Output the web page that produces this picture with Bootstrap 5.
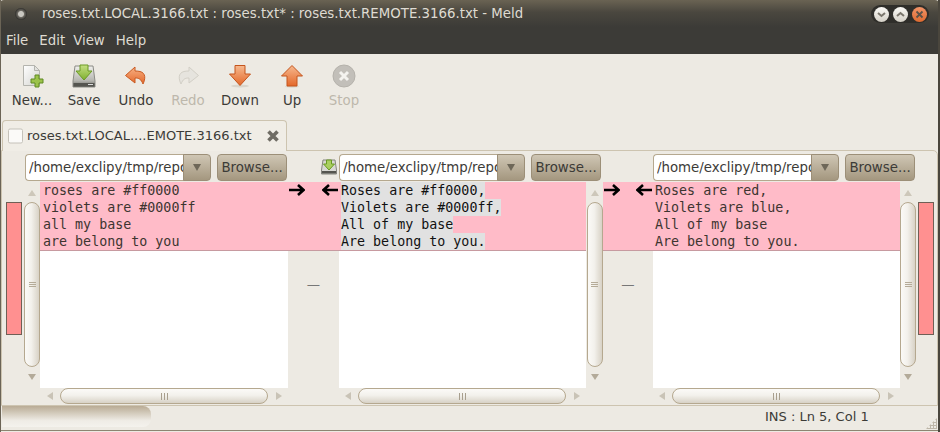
<!DOCTYPE html>
<html lang="en">
<head>
<meta charset="utf-8">
<title>Meld</title>
<link rel="stylesheet" href="https://cdn.jsdelivr.net/npm/bootstrap@5.3.0/dist/css/bootstrap.min.css">
<style>
html,body{margin:0;height:432px;overflow:hidden;background:#edeae3}
.meld-win{width:940px;height:432px;font:13.33px/16px "DejaVu Sans",sans-serif;color:#3c3b37;background:#edeae3;border-left:1px solid #6b6456;border-right:2px solid #4a463d;position:relative;overflow:hidden}
.meld-title{height:27px;margin:0 -2px 0 -1px;padding-left:42px;flex:none;color:#dfdbd2;background:linear-gradient(#6a6353,#4a473f 45%,#3c3b37);border-radius:4px 5px 0 0}
.meld-winicon{position:absolute;left:14px;top:8px;width:12px;height:12px;border-radius:50%;background:radial-gradient(circle,#c9c7c1 0 2.500px,#6d6a63 3.500px,#2e2d2a 6px)}
.meld-pill{position:absolute;left:870px;top:5px;width:58px;height:18px;border-radius:9px;background:#2f2e2a;gap:4px;padding:0 3px}
.meld-wb{width:15px;height:15px;border-radius:50%;background:linear-gradient(#fbfaf6,#d4d0c6)}
.meld-wb.meld-close{background:linear-gradient(#f29468,#dd6a30)}
.meld-menu{height:27px;flex:none;margin:0 -2px 0 -1px;padding-left:6px;background:#3c3b37;color:#dfdbd2}
.meld-menu .nav-link{padding:0;margin-right:11px;color:#dfdbd2;font-size:13.33px}
.meld-menu .nav-link.meld-tight{margin-right:8px}
.meld-tools{height:66px;flex:none;padding:10px 0 0 5px}
.meld-tool{width:52px;padding:0;border:0;border-radius:0;color:#3c3b37;font-size:13.33px;line-height:16px}
.meld-tool.meld-off{color:#bdb8ac;opacity:1}
.meld-tool svg{display:block;margin:0 auto 5px}
.meld-tabs{height:31px;flex:none;padding-left:1px;position:relative;z-index:1}
.meld-tab{width:285px;height:31px;background:#f0ede6;border:1px solid #cdc4b0;border-bottom:0;border-radius:4px 4px 0 0;padding:0 6px 0 4px;white-space:nowrap;font-size:13px}
.meld-tabname{margin-left:4px}
.meld-panel{height:256px;flex:none;margin-top:-1px;border:1px solid #cdc4b0;border-radius:0 5px 0 0;padding:3px 4px 0 4px}
.meld-heads{height:28px;padding-left:19px}
.meld-combo{width:187px;height:27px;flex:none}
.meld-combo .form-control{flex:none;width:159px;height:27px;padding:0 1px 0 3px;font-size:13.33px;color:#3c3b37;background:#fff;border:1px solid #b5a88f;border-right:0;border-radius:4px 0 0 4px;box-shadow:none;min-height:0;font-family:"DejaVu Sans",sans-serif}
.meld-arrowbtn{width:28px;height:27px;padding:0;background:linear-gradient(#cfc6b4,#a4977f);border:1px solid #9c8f78;border-radius:0 4px 4px 0}
.meld-browse{flex:none;width:70px;height:27px;margin-left:5px;padding:0;font-size:13.33px;color:#3c3b37;background:linear-gradient(#cfc6b4,#a4977f);border:1px solid #9c8f78;border-radius:4px;line-height:25px}
.meld-browse:hover,.meld-arrowbtn:hover{background:linear-gradient(#cfc6b4,#a4977f);color:#3c3b37;border-color:#9c8f78}
.meld-tri{display:block;margin:auto;width:0;height:0;border:4px solid transparent;border-top:7px solid #6e6758;border-bottom:0}
.meld-smallsave{margin:5px 2px 0 34px}
.meld-gap{width:52px}
.meld-grid{display:grid;grid-template-columns:16px 18px 248px 51px 247px 17px 50px 247px 18px 16px;grid-template-rows:206px 16px}
.meld-strip{width:16px;height:133px;margin-top:20px;background:#ff9090;border:1px solid #6f5f55}
.meld-vs{padding-top:8px;align-items:center;height:206px}
.meld-vs.meld-vsleft{padding-left:2px}
.meld-vs.meld-vsright{padding-right:2px}
.meld-up,.meld-dn{width:0;height:0;border:4px solid transparent;flex:none}
.meld-up{border-bottom:6px solid #cdc7ba;border-top:0;margin-bottom:6px}
.meld-dn{border-top:6px solid #b3aa99;border-bottom:0;margin-top:7px}
.meld-thumbv{width:16px;height:165px;flex:none;border:1px solid #b5a88f;border-radius:8px;background:linear-gradient(90deg,#fbfaf7,#f3f1ec 45%,#d8d2c6)}
.meld-thumbh{width:208px;height:16px;flex:none;border:1px solid #b5a88f;border-radius:8px;background:linear-gradient(#fbfaf7,#f3f1ec 45%,#d8d2c6)}
.meld-gripv{width:7px;height:5px;border-top:1px solid #b5ab98;border-bottom:1px solid #b5ab98;position:relative}
.meld-griph{width:7px;height:7px;border-left:1px solid #a89f8e;border-right:1px solid #a89f8e;position:relative}
.meld-griph::after{content:"";position:absolute;left:2px;top:0;height:7px;border-left:1px solid #a89f8e}
.meld-gripv::after{content:"";position:absolute;left:0;top:1px;width:7px;border-top:1px solid #b5ab98}
.meld-hs{height:16px;padding-left:6px;gap:7px}
.meld-hs.meld-hsleft{padding-left:7px}
.meld-l,.meld-r{width:0;height:0;border:4px solid transparent;flex:none}
.meld-l{border-right:6px solid #c9c3b6;border-left:0}
.meld-r{border-left:6px solid #c9c3b6;border-right:0;margin-left:1px}
.meld-pane{background:#fff;height:206px}
.meld-pink{background:#ffbbc8;height:69px;border-bottom:1px solid #c79aa0}
.meld-code{font:13.33px/17px "DejaVu Sans Mono",monospace;color:#3d3530;padding-left:2px;white-space:pre}
.meld-code.meld-codeleft{padding-left:3px}
.meld-code div{height:17px}
.meld-mid{color:#111}
.meld-mid span{background:#e1e1e1;display:inline-block}
.meld-gut{height:206px}
.meld-gutpink{height:69px;background:#ffbbc8;border-bottom:1px solid #c79aa0;padding:2px 1px 0}
.meld-dash{height:137px;color:#777;padding-top:26px}
.meld-status{height:25px;flex:none;position:relative;padding-left:764px;border-bottom:1px solid #8d8572;padding-top:1px;font-size:13px}
.meld-prog{position:absolute;left:1px;top:0;width:149px;height:21px;border-radius:0 8px 8px 0;background:linear-gradient(#b9ab95,#d4ccbd 35%,#efece6 70%,#f4f2ed)}
.meld-statustxt{line-height:20px}
.meld-grip{position:absolute;right:1px;bottom:1px;width:11px;height:11px;background:radial-gradient(circle,#bdb6a8 1px,transparent 1.2px) 0 0/3px 3px;clip-path:polygon(100% 0,100% 100%,0 100%)}
</style>
</head>
<body>
<div class="meld-win d-flex flex-column">
  <div class="meld-title d-flex align-items-center">roses.txt.LOCAL.3166.txt : roses.txt* : roses.txt.REMOTE.3166.txt - Meld</div>
  <span class="meld-winicon"></span>
  <div class="meld-pill d-flex align-items-center justify-content-center">
    <span class="meld-wb d-flex"><svg width="15" height="15" viewBox="0 0 15 15"><path d="M4 6l3.500 3L11 6" fill="none" stroke="#7a766c" stroke-width="2"/></svg></span>
    <span class="meld-wb d-flex"><svg width="15" height="15" viewBox="0 0 15 15"><path d="M4 9l3.500-3L11 9" fill="none" stroke="#7a766c" stroke-width="2"/></svg></span>
    <span class="meld-wb meld-close d-flex"><svg width="15" height="15" viewBox="0 0 15 15"><path d="M4.500 4.500l6 6M10.500 4.500l-6 6" fill="none" stroke="#5b5248" stroke-width="1.800"/></svg></span>
  </div>
  <nav class="meld-menu nav align-items-center">
    <a class="nav-link" href="#">File</a><a class="nav-link meld-tight" href="#">Edit</a><a class="nav-link" href="#">View</a><a class="nav-link" href="#">Help</a>
  </nav>
  <div class="meld-tools d-flex align-items-start">
    <button class="btn meld-tool"><svg width="24" height="24" viewBox="0 0 24 24"><defs><linearGradient id="pg" x1="0" y1="0" x2="1" y2="1"><stop offset="0" stop-color="#fff"/><stop offset="1" stop-color="#d3d3cf"/></linearGradient></defs><path d="M3.500 1.500h11l5 5v15h-16z" fill="url(#pg)" stroke="#b4b4ae"/><path d="M14.500 1.500v5h5z" fill="#e2e2de" stroke="#b4b4ae"/><path d="M15 11h4v4h4v4h-4v4h-4v-4h-4v-4h4z" fill="#9bc24a" stroke="#5f8a22"/></svg>New...</button>
    <button class="btn meld-tool"><svg width="24" height="24" viewBox="0 0 24 24"><defs><linearGradient id="hd" x1="0" y1="0" x2="0" y2="1"><stop offset="0" stop-color="#f1f1ee"/><stop offset=".7" stop-color="#b5b5af"/><stop offset="1" stop-color="#65655f"/></linearGradient><linearGradient id="gr" x1="0" y1="0" x2="0" y2="1"><stop offset="0" stop-color="#c4df83"/><stop offset="1" stop-color="#7fb02f"/></linearGradient></defs><path d="M3 2h18l2 15v6H1v-6z" fill="url(#hd)" stroke="#8b8b85"/><rect x="1.500" y="19" width="21" height="3.500" fill="#55554f"/><rect x="16" y="20" width="5" height="1" fill="#ddd"/><path d="M8 1h8v6h4l-8 9-8-9h4z" fill="url(#gr)" stroke="#6a9a24"/></svg>Save</button>
    <button class="btn meld-tool"><svg width="24" height="24" viewBox="0 0 24 24"><defs><linearGradient id="or" x1="0" y1="0" x2="0" y2="1"><stop offset="0" stop-color="#f7b184"/><stop offset="1" stop-color="#e4692c"/></linearGradient></defs><path d="M11 3L1.500 11.500 11 19v-5c4 0 6 1 8 6 2.500-5 3-11-3-12.500-1.500-.4-3.500-.5-5-.5z" fill="url(#or)" stroke="#c95a22"/></svg>Undo</button>
    <button class="btn meld-tool meld-off"><svg width="24" height="24" viewBox="0 0 24 24"><path d="M13 3l9.500 8.500L13 19v-5c-4 0-6 1-8 6-2.500-5-3-11 3-12.500 1.500-.4 3.500-.5 5-.5z" fill="#e6e4de" stroke="#d2cfc6"/></svg>Redo</button>
    <button class="btn meld-tool"><svg width="24" height="24" viewBox="0 0 24 24"><defs><linearGradient id="or2" x1="0" y1="0" x2="0" y2="1"><stop offset="0" stop-color="#f6b98f"/><stop offset="1" stop-color="#e4682a"/></linearGradient></defs><ellipse cx="12" cy="22" rx="9" ry="1.500" fill="#d9d5cb"/><path d="M7 1.500h10V10h5.500L12 21.500 1.500 10H7z" fill="url(#or2)" stroke="#c4541c"/></svg>Down</button>
    <button class="btn meld-tool"><svg width="24" height="24" viewBox="0 0 24 24"><ellipse cx="12" cy="22.500" rx="7" ry="1.200" fill="#d9d5cb"/><path d="M12 1.500L22.500 12H17v10H7V12H1.500z" fill="url(#or2)" stroke="#c4541c"/></svg>Up</button>
    <button class="btn meld-tool meld-off"><svg width="24" height="24" viewBox="0 0 24 24"><circle cx="12" cy="12" r="11" fill="#c2bfb9" stroke="#b5b2ab"/><path d="M8 8l8 8M16 8l-8 8" stroke="#f4f3ef" stroke-width="3"/></svg>Stop</button>
  </div>
  <div class="meld-tabs d-flex">
    <div class="meld-tab d-flex align-items-center">
      <svg class="flex-shrink-0" width="16" height="16" viewBox="0 0 16 16"><rect x="1.500" y="1" width="14" height="14" rx="1.500" fill="#fbfaf8" stroke="#c5c2ba"/></svg>
      <span class="meld-tabname">roses.txt.LOCAL....EMOTE.3166.txt</span>
      <svg class="ms-auto" width="14" height="14" viewBox="0 0 14 14"><path d="M2.500 2.500l9 9M11.500 2.500l-9 9" stroke="#6f6c64" stroke-width="3.600"/></svg>
    </div>
  </div>
  <div class="meld-panel">
    <div class="meld-heads d-flex">
      <div class="meld-combo input-group flex-nowrap"><input class="form-control" value="/home/exclipy/tmp/repo/roses.txt.LOCAL.3166.txt" aria-label="path"><button class="btn meld-arrowbtn"><i class="meld-tri"></i></button></div>
      <button class="btn meld-browse">Browse...</button>
      <svg class="meld-smallsave flex-shrink-0" width="16" height="16" viewBox="0 0 16 16"><path d="M2 1h12l1.500 10v4H.5v-4z" fill="#d8d8d3" stroke="#85857f"/><rect x="1" y="12" width="14" height="2.500" fill="#55554f"/><path d="M5.500 1h5v4h3L8 11 2.500 5h3z" fill="#a9cf5f" stroke="#6a9a24"/></svg>
      <div class="meld-combo input-group flex-nowrap"><input class="form-control" value="/home/exclipy/tmp/repo/roses.txt" aria-label="path"><button class="btn meld-arrowbtn"><i class="meld-tri"></i></button></div>
      <button class="btn meld-browse">Browse...</button>
      <div class="meld-gap flex-shrink-0"></div>
      <div class="meld-combo input-group flex-nowrap"><input class="form-control" value="/home/exclipy/tmp/repo/roses.txt.REMOTE.3166.txt" aria-label="path"><button class="btn meld-arrowbtn"><i class="meld-tri"></i></button></div>
      <button class="btn meld-browse">Browse...</button>
    </div>
    <div class="meld-grid">
      <div><div class="meld-strip"></div></div>
      <div class="meld-vs meld-vsleft d-flex flex-column"><i class="meld-up"></i><div class="meld-thumbv d-flex align-items-center justify-content-center"><i class="meld-gripv"></i></div><i class="meld-dn"></i></div>
      <div class="meld-pane"><div class="meld-pink meld-code meld-codeleft"><div>roses are #ff0000</div><div>violets are #0000ff</div><div>all my base</div><div>are belong to you</div></div></div>
      <div class="meld-gut"><div class="meld-gutpink d-flex justify-content-between align-items-start">
        <svg width="16" height="12" viewBox="0 0 16 12"><path d="M0 6h14M9 1l5.500 5L9 11" fill="none" stroke="#000" stroke-width="2.600"/></svg>
        <svg width="16" height="12" viewBox="0 0 16 12"><path d="M16 6H2M7 1L1.500 6 7 11" fill="none" stroke="#000" stroke-width="2.600"/></svg>
      </div><div class="meld-dash d-flex align-items-start justify-content-center">—</div></div>
      <div class="meld-pane"><div class="meld-pink meld-code meld-mid"><div><span>Roses are #ff0000,</span></div><div><span>Violets are #0000ff,</span></div><div><span>All of my base</span></div><div><span>Are belong to you.</span></div></div></div>
      <div class="meld-vs d-flex flex-column"><i class="meld-up"></i><div class="meld-thumbv d-flex align-items-center justify-content-center"><i class="meld-gripv"></i></div><i class="meld-dn"></i></div>
      <div class="meld-gut"><div class="meld-gutpink d-flex justify-content-between align-items-start">
        <svg width="16" height="12" viewBox="0 0 16 12"><path d="M0 6h14M9 1l5.500 5L9 11" fill="none" stroke="#000" stroke-width="2.600"/></svg>
        <svg width="16" height="12" viewBox="0 0 16 12"><path d="M16 6H2M7 1L1.500 6 7 11" fill="none" stroke="#000" stroke-width="2.600"/></svg>
      </div><div class="meld-dash d-flex align-items-start justify-content-center">—</div></div>
      <div class="meld-pane"><div class="meld-pink meld-code"><div>Roses are red,</div><div>Violets are blue,</div><div>All of my base</div><div>Are belong to you.</div></div></div>
      <div class="meld-vs meld-vsright d-flex flex-column"><i class="meld-up"></i><div class="meld-thumbv d-flex align-items-center justify-content-center"><i class="meld-gripv"></i></div><i class="meld-dn"></i></div>
      <div><div class="meld-strip"></div></div>

      <div></div><div></div>
      <div class="meld-hs meld-hsleft d-flex align-items-center"><i class="meld-l"></i><div class="meld-thumbh d-flex align-items-center justify-content-center"><i class="meld-griph"></i></div><i class="meld-r"></i></div>
      <div></div>
      <div class="meld-hs d-flex align-items-center"><i class="meld-l"></i><div class="meld-thumbh d-flex align-items-center justify-content-center"><i class="meld-griph"></i></div><i class="meld-r"></i></div>
      <div></div><div></div>
      <div class="meld-hs d-flex align-items-center"><i class="meld-l"></i><div class="meld-thumbh d-flex align-items-center justify-content-center"><i class="meld-griph"></i></div><i class="meld-r"></i></div>
      <div></div><div></div>
    </div>
  </div>
  <div class="meld-status"><div class="meld-prog"></div><div class="meld-statustxt">INS : Ln 5, Col 1</div><div class="meld-grip"></div></div>
</div>
<script src="https://cdn.jsdelivr.net/npm/bootstrap@5.3.0/dist/js/bootstrap.bundle.min.js"></script>
</body>
</html>
